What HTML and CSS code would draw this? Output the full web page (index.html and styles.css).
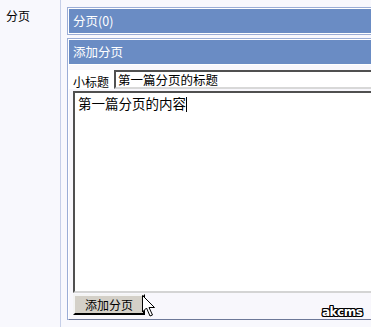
FILE: index.html
```html
<!DOCTYPE html>
<html>
    <head>
        <meta charset="UTF-8">
        <title>分页</title>
        <link rel="stylesheet" href="styles.css">
    </head>
    <body>
        <div class="row">
            <div class="label">分页</div>
            <div class="content">
                <div class="bar">
                    <div class="bar-title">分页(0)</div>
                </div>
                <div class="panel">
                    <div class="bar-title">添加分页</div>
                    <div class="panel-body">
                        <div class="field">
                            <span class="field-name">小标题</span>
                            <input class="title-input" type="text" value="第一篇分页的标题">
                        </div>
                        <div class="editor">第一篇分页的内容<span class="caret"></span></div>
                        <div class="button-row">
                            <span class="button">添加分页</span>
                            <svg class="pointer" width="14" height="24" viewBox="0 0 14 24">
                                <path d="M0.5 0.5 L0.5 17 L4.5 13 L8 21 L10.5 20 L7 12.5 L12.5 12.5 Z" fill="#fff" stroke="#000" stroke-width="1"/>
                            </svg>
                        </div>
                    </div>
                </div>
            </div>
        </div>
        <div class="mark">akcms</div>
    </body>
</html>
```

FILE: styles.css
```css
body{
    margin: 0;
    background: #f8f8fd;
    font-family: "Noto Sans CJK SC", "DejaVu Sans", sans-serif;
    font-size: 12px;
    color: #000;
    overflow: hidden;
}
.row{
    display: flex;
    height: 327px;
}
.label{
    width: 54px;
    flex: none;
    padding: 7px 0 0 6px;
    border-right: 1px solid #c6cfe8;
    line-height: 17px;
}
.content{
    flex: 1;
    overflow: hidden;
    padding: 7px 0 0 6px;
}
.bar{
    width: 400px;
    border: 1px solid #9badd6;
    padding: 1px;
    background: #fff;
    margin-bottom: 3px;
}
.bar-title{
    background: #6a8cc4;
    color: #fff;
    height: 24px;
    line-height: 24px;
    padding-left: 4px;
    font-size: 12.5px;
}
.panel{
    width: 400px;
    height: 279px;
    border: 1px solid #9badd6;
    padding: 1px 1px 0 1px;
    background: #fff;
    display: flex;
    flex-direction: column;
}
.panel-body{
    flex: 1;
    background: #f8f7fc;
    padding: 5px 0 0 4px;
    border-top: 1px solid #fff;
    border-bottom: 1px solid #6d7898;
}
.field{
    display: flex;
    align-items: flex-end;
    gap: 5px;
    background: #fff;
    margin-left: -4px;
    padding-left: 4px;
}
.field-name{
    line-height: 15px;
}
.title-input{
    flex: 1;
    height: 15px;
    margin: 0;
    padding: 0 2px;
    font: inherit;
    font-size: 12.5px;
    border: 2px solid;
    border-color: #505050 #e0e0e0 #d8d8d8 #505050;
    background: #fff;
}
.editor{
    height: 194px;
    margin-top: 2px;
    padding: 2px 3px;
    font-size: 13.5px;
    line-height: 17px;
    border: 2px solid;
    border-color: #505050 #e0e0e0 #d4d4d4 #505050;
    background: #fff;
}
.caret{
    display: inline-block;
    width: 1px;
    height: 15px;
    background: #000;
    vertical-align: -3px;
}
.button-row{
    display: flex;
    align-items: flex-start;
    margin-top: 1px;
}
.button{
    width: 68px;
    height: 17px;
    line-height: 17px;
    text-align: center;
    background: #d4d0c8;
    border: 2px solid;
    border-color: #f4f4f4 #000 #000 #f4f4f4;
}
.pointer{
    margin-left: -3px;
    margin-top: 1px;
}
.mark{
    position: absolute;
    left: 322px;
    top: 305px;
    font-family: "DejaVu Sans", sans-serif;
    font-weight: bold;
    font-size: 12px;
    color: #fff;
    letter-spacing: -0.5px;
    text-shadow: 1px 0 0 #000, -1px 0 0 #000, 0 1px 0 #000, 0 -1px 0 #000, 1px 1px 0 #000, -1px -1px 0 #000, 1px -1px 0 #000, -1px 1px 0 #000;
}
```
